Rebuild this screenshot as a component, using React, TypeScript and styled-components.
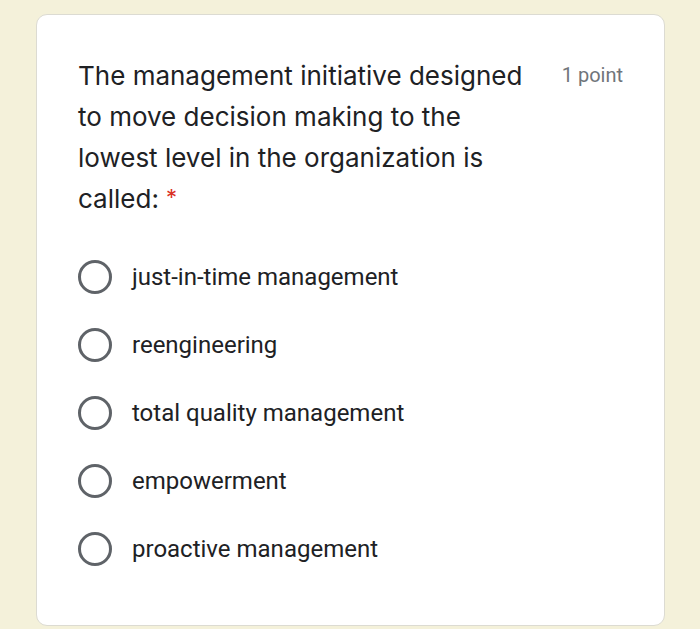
import styled, { createGlobalStyle } from "styled-components";

const GlobalStyle = createGlobalStyle`
  html, body {
    margin: 0;
    padding: 0;
    background: #f4f1da;
  }
  body {
    font-family: Roboto, "Liberation Sans", sans-serif;
  }
`;

const Page = styled.div`
  width: 700px;
  height: 629px;
  padding: 14px 35px 0 36px;
  box-sizing: border-box;
`;

const Card = styled.div`
  height: 612px;
  box-sizing: border-box;
  background: #ffffff;
  border: 1px solid #dcdbd2;
  border-radius: 11px;
  padding: 40px 41px 0 41px;
`;

const Header = styled.div`
  display: flex;
  justify-content: space-between;
  align-items: flex-start;
`;

const Question = styled.div`
  width: 462px;
  font-family: Inter, Roboto, sans-serif;
  font-size: 26px;
  line-height: 41px;
  color: #202124;
`;

const Required = styled.span`
  display: inline-block;
  color: #d93025;
  margin-left: 7px;
  font-size: 22px;
  line-height: 1;
  vertical-align: 3px;
`;

const Points = styled.div`
  font-size: 20px;
  line-height: 41px;
  color: #70757a;
`;

const Options = styled.div`
  display: flex;
  flex-direction: column;
  gap: 34px;
  margin-top: 41px;
`;

const Option = styled.label`
  display: flex;
  align-items: center;
  gap: 20px;
  height: 34px;
`;

const Radio = styled.span`
  width: 34px;
  height: 34px;
  box-sizing: border-box;
  border: 3.5px solid #5f6368;
  border-radius: 50%;
  flex-shrink: 0;
`;

const OptionText = styled.span`
  font-size: 24px;
  color: #202124;
`;

const choices = [
  "just-in-time management",
  "reengineering",
  "total quality management",
  "empowerment",
  "proactive management",
];

export default function App() {
  return (
    <Page>
      <GlobalStyle />
      <Card>
        <Header>
          <Question>
            The management initiative designed to move decision making to the
            lowest level in the organization is called:
            <Required>*</Required>
          </Question>
          <Points>1 point</Points>
        </Header>
        <Options>
          {choices.map((c) => (
            <Option key={c}>
              <Radio />
              <OptionText>{c}</OptionText>
            </Option>
          ))}
        </Options>
      </Card>
    </Page>
  );
}
